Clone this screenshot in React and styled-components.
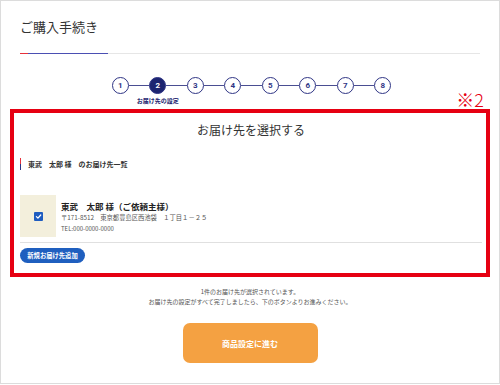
import React from "react";
import styled, { createGlobalStyle } from "styled-components";

const GlobalStyle = createGlobalStyle`
  html, body {
    margin: 0;
    padding: 0;
    background: #fff;
  }
  body {
    font-family: "Noto Sans CJK JP", "Noto Sans", sans-serif;
    color: #333;
  }
`;

const FrameUI = styled.div`
  width: 500px;
  height: 384px;
  box-sizing: border-box;
  border: 1px solid #dcdcdc;
  padding: 0 9px;
  display: flex;
  flex-direction: column;
`;

const HeaderUI = styled.div`
  padding: 16px 10px 0;
`;

const TitleUI = styled.h1`
  margin: 0;
  font-size: 13px;
  line-height: 20px;
  font-weight: 400;
  color: #333;
`;

const RuleUI = styled.div`
  margin-top: 16px;
  height: 1px;
  background: linear-gradient(
    to right,
    #e8313b 0,
    #e8313b 8px,
    #4b4fb3 8px,
    #4b4fb3 88px,
    #e6e6e6 88px
  );
`;

const StepAreaUI = styled.div`
  display: grid;
  height: 55px;
`;

const StepsUI = styled.ol`
  grid-area: 1 / 1;
  justify-self: center;
  align-self: start;
  list-style: none;
  margin: 23px 0 0 3px;
  padding: 0;
  display: flex;
  align-items: center;
`;

const StepUI = styled.li`
  position: relative;
  width: 17px;
  height: 17px;
  box-sizing: border-box;
  border-radius: 50%;
  border: 1.5px solid #2f3585;
  background: ${(p) => (p.$active ? "#1c2470" : "#fff")};
  color: ${(p) => (p.$active ? "#fff" : "#2f3585")};
  font-family: "Roboto", sans-serif;
  font-size: 8px;
  font-weight: 700;
  display: flex;
  align-items: center;
  justify-content: center;
`;

const ConnectorUI = styled.span`
  width: 20.5px;
  height: 1px;
  background: #4a4e92;
`;

const StepLabelUI = styled.span`
  position: absolute;
  top: 19px;
  left: 50%;
  transform: translateX(-50%);
  white-space: nowrap;
  font-family: "Noto Sans CJK JP", sans-serif;
  font-size: 6px;
  line-height: 8px;
  font-weight: 700;
  color: #1c2470;
`;

const NoteUI = styled.span`
  grid-area: 1 / 1;
  justify-self: end;
  align-self: end;
  margin: 0 6px 1px 0;
  font-size: 18px;
  line-height: 18px;
  font-weight: 300;
  color: #e60012;
`;

const BoxUI = styled.section`
  border: 4px solid #e60012;
  padding: 8px 4px 10px 6px;
`;

const BoxTitleUI = styled.h2`
  margin: 0;
  text-align: center;
  font-size: 12px;
  line-height: 18px;
  font-weight: 400;
  color: #333;
`;

const ListHeadUI = styled.h3`
  margin: 19px 0 0;
  padding-left: 7px;
  border-left: 1px solid;
  border-image: linear-gradient(to bottom, #e8313b 50%, #2f3585 50%) 1;
  font-size: 7px;
  line-height: 12px;
  font-weight: 700;
  color: #333;
  white-space: pre;
`;

const AddressRowUI = styled.div`
  margin-top: 25px;
  display: flex;
  gap: 5px;
  padding-bottom: 5px;
  border-bottom: 1px solid #e0e0e0;
`;

const CheckCellUI = styled.div`
  width: 36px;
  height: 42px;
  background: #f3efdc;
  display: flex;
  align-items: center;
  justify-content: center;
`;

const CheckBoxUI = styled.span`
  width: 9px;
  height: 9px;
  border-radius: 1px;
  background: #1e5cc0;
  display: flex;
  align-items: center;
  justify-content: center;
`;

const InfoUI = styled.div`
  padding-top: 5px;
  display: flex;
  flex-direction: column;
`;

const NameUI = styled.div`
  font-size: 8.5px;
  line-height: 13px;
  font-weight: 700;
  color: #222;
  white-space: pre;
`;

const DetailUI = styled.div`
  font-size: ${(p) => p.$size || "6.3px"};
  line-height: 10.5px;
  color: #555;
  white-space: pre;
`;

const AddButtonUI = styled.button`
  margin-top: 5px;
  width: 65px;
  height: 15px;
  border: none;
  border-radius: 8px;
  background: #1f5fbf;
  color: #fff;
  font-family: "Noto Sans CJK JP", sans-serif;
  font-size: 6.3px;
  font-weight: 700;
  padding: 0;
  display: flex;
  align-items: center;
  justify-content: center;
`;

const MessageUI = styled.p`
  margin: 10px 0 0;
  text-align: center;
  font-size: 6px;
  line-height: 10px;
  color: #555;
`;

const NextButtonUI = styled.button`
  margin: 16px auto 0;
  width: 135px;
  height: 40px;
  border: none;
  border-radius: 7px;
  background: #f4a142;
  color: #fff;
  font-family: "Noto Sans CJK JP", sans-serif;
  font-size: 8px;
  font-weight: 700;
  display: flex;
  align-items: center;
  justify-content: center;
`;

const steps = [1, 2, 3, 4, 5, 6, 7, 8];

export default function App() {
  return (
    <>
      <GlobalStyle />
      <FrameUI>
        <HeaderUI>
          <TitleUI>ご購入手続き</TitleUI>
          <RuleUI />
        </HeaderUI>

        <StepAreaUI>
          <StepsUI>
            {steps.map((n, i) => (
              <React.Fragment key={n}>
                {i > 0 && <ConnectorUI />}
                <StepUI $active={n === 2}>
                  {n}
                  {n === 2 && <StepLabelUI>お届け先の設定</StepLabelUI>}
                </StepUI>
              </React.Fragment>
            ))}
          </StepsUI>
          <NoteUI>※2</NoteUI>
        </StepAreaUI>

        <BoxUI>
          <BoxTitleUI>お届け先を選択する</BoxTitleUI>
          <ListHeadUI>{"東武　太郎 様　のお届け先一覧"}</ListHeadUI>

          <AddressRowUI>
            <CheckCellUI>
              <CheckBoxUI>
                <svg width="7" height="7" viewBox="0 0 10 10">
                  <path
                    d="M2 5.2 L4.2 7.3 L8.2 2.8"
                    fill="none"
                    stroke="#fff"
                    strokeWidth="1.8"
                    strokeLinecap="round"
                    strokeLinejoin="round"
                  />
                </svg>
              </CheckBoxUI>
            </CheckCellUI>
            <InfoUI>
              <NameUI>{"東武　太郎 様（ご依頼主様）"}</NameUI>
              <DetailUI>{"〒171-8512　東京都豊島区西池袋　１丁目１－２５"}</DetailUI>
              <DetailUI $size="6px">TEL:000-0000-0000</DetailUI>
            </InfoUI>
          </AddressRowUI>

          <AddButtonUI type="button">新規お届け先追加</AddButtonUI>
        </BoxUI>

        <MessageUI>
          1件のお届け先が選択されています。
          <br />
          お届け先の設定がすべて完了しましたら、下のボタンよりお進みください。
        </MessageUI>

        <NextButtonUI type="button">商品設定に進む</NextButtonUI>
      </FrameUI>
    </>
  );
}
